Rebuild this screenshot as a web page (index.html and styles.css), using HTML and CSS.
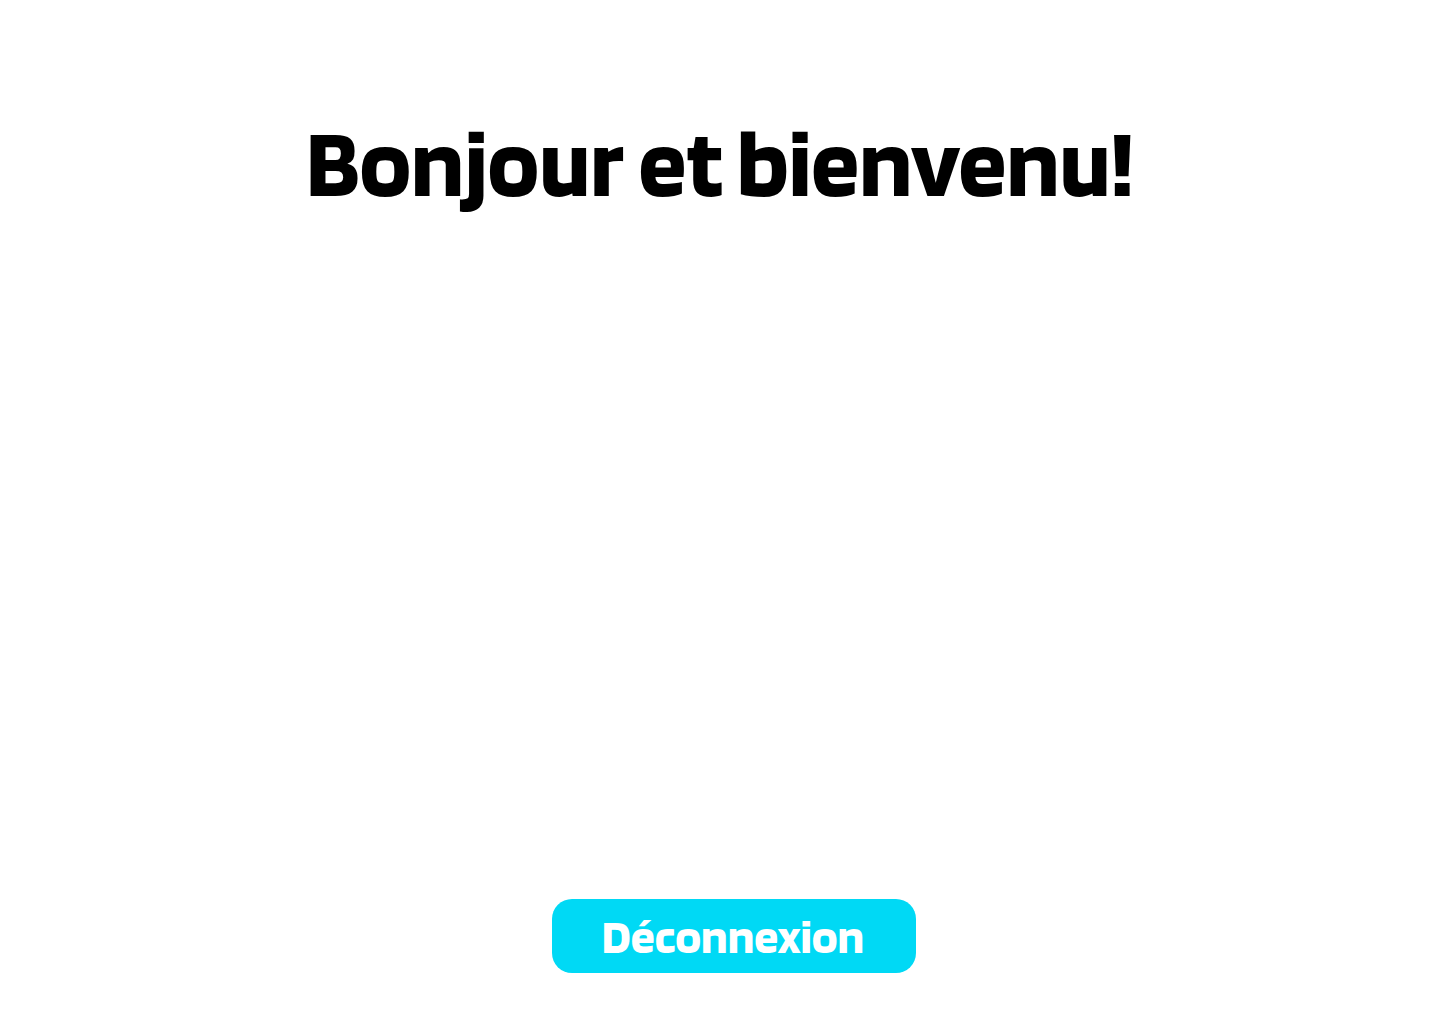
FILE: index.html
```html
<!DOCTYPE html>
<html lang="fr">
<head>
<meta charset="utf-8">
<meta name="viewport" content="width=device-width, initial-scale=1">
<title>Bienvenue</title>
<link rel="stylesheet" href="styles.css">
</head>
<body>
<main class="page">
  <h1 class="title">Bonjour et bienvenu!</h1>
  <button class="logout" type="button">Déconnexion</button>
</main>
</body>
</html>
```

FILE: styles.css
```css
* {
  box-sizing: border-box;
}

body {
  margin: 0;
  background: #fff;
  color: #000;
  font-family: Blinker, "Noto Sans", sans-serif;
}

.page {
  display: flex;
  flex-direction: column;
  align-items: center;
  justify-content: space-between;
  min-height: 100vh;
  padding: 109px 24px 51px;
}

.title {
  margin: 0;
  font-size: 96px;
  line-height: 106px;
  font-weight: 700;
  text-align: center;
}

.logout {
  margin-left: 28px;
  padding: 10px 52px 10px 50px;
  border: 0;
  border-radius: 20px;
  background: #00d9f5;
  color: #fff;
  font-family: inherit;
  font-size: 48px;
  line-height: 54px;
  font-weight: 700;
  cursor: pointer;
}
```
